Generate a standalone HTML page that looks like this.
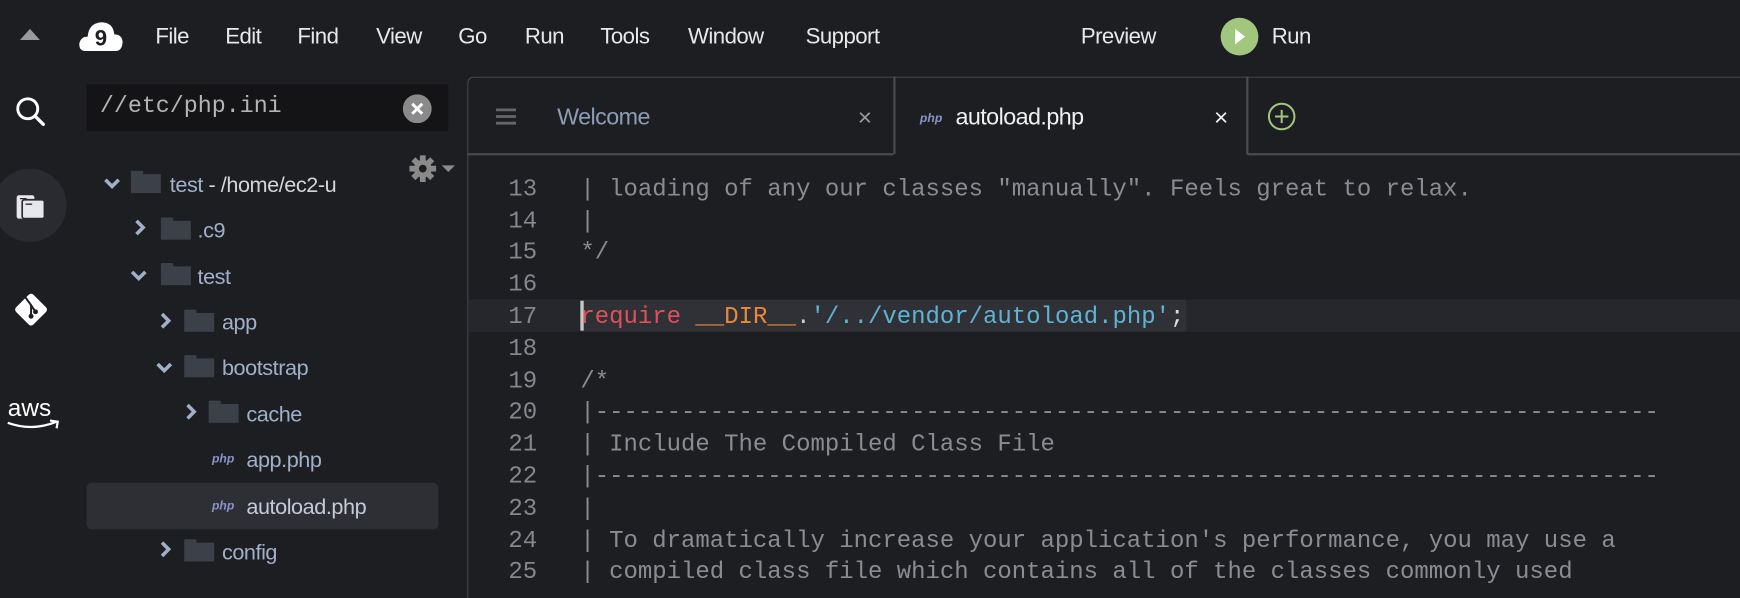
<!DOCTYPE html>
<html><head><meta charset="utf-8"><style>
*{margin:0;padding:0;box-sizing:border-box}
html,body{width:1740px;height:574px;overflow:hidden;background:#1d1e22}
#s{position:absolute;left:0;top:0;width:1568px;height:517px;transform:scale(1.10969);transform-origin:0 0;font-family:"Liberation Sans",sans-serif}
.a{position:absolute;white-space:pre}
.menu{font-size:20px;color:#e8e8e8;top:22px;letter-spacing:-0.5px}
.tr{font-size:19.5px;color:#9fb0c8;letter-spacing:-0.4px;margin-top:2px}
.fold{position:absolute;width:27px;height:20px}
.fold:before{content:"";position:absolute;left:0;top:0;width:11px;height:4px;background:#3b4049;border-radius:1px 1px 0 0}
.fold:after{content:"";position:absolute;left:0;top:3px;width:27px;height:17px;background:#3b4049}
.php{font-size:11px;font-style:italic;font-weight:bold;color:#8a93c8}
.code{font-family:"Liberation Mono",monospace;font-size:21.6px;line-height:28.8px;position:absolute;left:0;top:2px;width:1568px}
.ln{position:absolute;left:430px;width:54px;text-align:right;color:#85878c}
.cl{position:absolute;left:523px;color:#8a8c91}
</style></head><body><div id="s">
<svg class="a" style="left:17px;top:26px" width="20" height="12"><polygon points="10,0 19,10 1,10" fill="#9a9a9a"/></svg>
<svg class="a" style="left:71px;top:16px" width="40" height="32" viewBox="0 0 40 32"><path d="M6 30 Q0 30 0.5 23 Q2 17 8 17 Q9 5 20 4 Q31 4 32 15 Q39 15 39.5 22 Q39 30 33 30 Z" fill="#fff"/><text x="20" y="25" font-family="Liberation Sans" font-weight="bold" font-size="20" text-anchor="middle" fill="#1d1e22">9</text></svg>
<div class="a menu" style="left:140px">File</div>
<div class="a menu" style="left:203px">Edit</div>
<div class="a menu" style="left:268px">Find</div>
<div class="a menu" style="left:339px">View</div>
<div class="a menu" style="left:413px">Go</div>
<div class="a menu" style="left:473px">Run</div>
<div class="a menu" style="left:541px">Tools</div>
<div class="a menu" style="left:620px">Window</div>
<div class="a menu" style="left:726px">Support</div>
<div class="a menu" style="left:974px">Preview</div>
<svg class="a" style="left:1099px;top:15px" width="36" height="36"><circle cx="18" cy="18" r="17" fill="#a1c77f"/><polygon points="14,11 23,18 14,25" fill="#fff"/></svg>
<div class="a menu" style="left:1146px">Run</div>
<svg class="a" style="left:12px;top:85px" width="32" height="32"><circle cx="13" cy="13" r="9" stroke="#fff" stroke-width="2.6" fill="none"/><line x1="20" y1="20" x2="27" y2="27" stroke="#fff" stroke-width="3" stroke-linecap="round"/></svg>
<div class="a" style="left:-6px;top:152px;width:66px;height:66px;border-radius:50%;background:#2a2b30"></div>
<svg class="a" style="left:13px;top:174px" width="30" height="26"><rect x="2" y="2" width="16" height="21" rx="2" fill="#e8e8ec"/><rect x="7" y="6" width="20" height="17" rx="2" fill="#e8e8ec" stroke="#2a2b30" stroke-width="1.5"/><line x1="10" y1="10" x2="16" y2="10" stroke="#2a2b30" stroke-width="1.2"/><line x1="5" y1="5" x2="11" y2="5" stroke="#2a2b30" stroke-width="1.2"/></svg>
<svg class="a" style="left:9px;top:260px" width="38" height="38"><rect x="8" y="8" width="22" height="22" rx="3" fill="#fff" transform="rotate(45 19 19)"/><path d="M14 8 L19 15 L19 25 M19 15 L23 21" stroke="#1d1e22" stroke-width="1.8" fill="none"/><circle cx="19" cy="25" r="2.2" fill="#1d1e22"/><circle cx="23" cy="21" r="2.2" fill="#1d1e22"/></svg>
<div class="a" style="left:7px;top:355px;font-size:22px;color:#fff">aws</div>
<svg class="a" style="left:5px;top:377px" width="50" height="14"><path d="M2 4 Q24 12 46 3" stroke="#fff" stroke-width="2" fill="none"/><path d="M40 2 L47 3 L46 9" stroke="#fff" stroke-width="2" fill="none"/></svg>
<div class="a" style="left:78px;top:76px;width:326px;height:42px;background:#141417"></div>
<div class="a" style="left:90px;top:85px;font-family:'Liberation Mono',monospace;font-size:21px;color:#b4b4b4">//etc/php.ini</div>
<svg class="a" style="left:363px;top:85px" width="26" height="26"><circle cx="13" cy="13" r="13" fill="#8a8a8a"/><path d="M8.5 8.5 L17.5 17.5 M17.5 8.5 L8.5 17.5" stroke="#fff" stroke-width="2.6"/></svg>
<svg class="a" style="left:368px;top:139px" width="46" height="26"><g transform="translate(13 13)" fill="#8a8a8a"><circle r="8"/><rect x="-2.6" y="-12" width="5.2" height="24"/><rect x="-2.6" y="-12" width="5.2" height="24" transform="rotate(45)"/><rect x="-2.6" y="-12" width="5.2" height="24" transform="rotate(90)"/><rect x="-2.6" y="-12" width="5.2" height="24" transform="rotate(135)"/><circle r="3.5" fill="#1d1e22"/></g><polygon points="30,10 42,10 36,16" fill="#8a8a8a"/></svg>
<div class="a" style="left:78px;top:435px;width:317px;height:42px;background:#2e2f34;border-radius:5px"></div>
<svg class="a" width="16" height="16" style="left:93px;top:157px"><path d="M2 5 L8 11 L14 5" stroke="#9fb0c8" stroke-width="3.2" fill="none"/></svg>
<div class="fold" style="left:118px;top:154px"></div><div class="a tr" style="left:153px;top:154px">test<span style="color:#d4d4d4"> - /home/ec2-u</span></div>
<svg class="a" width="16" height="16" style="left:118px;top:197px"><path d="M5 2 L11 8 L5 14" stroke="#9fb0c8" stroke-width="3.2" fill="none"/></svg>
<div class="fold" style="left:145px;top:196px"></div><div class="a tr" style="left:178px;top:195px">.c9</div>
<svg class="a" width="16" height="16" style="left:117px;top:240px"><path d="M2 5 L8 11 L14 5" stroke="#9fb0c8" stroke-width="3.2" fill="none"/></svg>
<div class="fold" style="left:145px;top:237px"></div><div class="a tr" style="left:178px;top:237px">test</div>
<svg class="a" width="16" height="16" style="left:141px;top:281px"><path d="M5 2 L11 8 L5 14" stroke="#9fb0c8" stroke-width="3.2" fill="none"/></svg>
<div class="fold" style="left:166px;top:279px"></div><div class="a tr" style="left:200px;top:278px">app</div>
<svg class="a" width="16" height="16" style="left:140px;top:323px"><path d="M2 5 L8 11 L14 5" stroke="#9fb0c8" stroke-width="3.2" fill="none"/></svg>
<div class="fold" style="left:166px;top:320px"></div><div class="a tr" style="left:200px;top:319px">bootstrap</div>
<svg class="a" width="16" height="16" style="left:164px;top:363px"><path d="M5 2 L11 8 L5 14" stroke="#9fb0c8" stroke-width="3.2" fill="none"/></svg>
<div class="fold" style="left:188px;top:361px"></div><div class="a tr" style="left:222px;top:361px">cache</div>
<div class="a php" style="left:191px;top:408px">php</div><div class="a tr" style="left:222px;top:402px">app.php</div>
<div class="a php" style="left:191px;top:450px">php</div><div class="a tr" style="left:222px;top:444px;color:#c4cbd8">autoload.php</div>
<svg class="a" width="16" height="16" style="left:141px;top:487px"><path d="M5 2 L11 8 L5 14" stroke="#9fb0c8" stroke-width="3.2" fill="none"/></svg>
<div class="fold" style="left:166px;top:486px"></div><div class="a tr" style="left:200px;top:485px">config</div>
<div class="a" style="left:421px;top:69px;width:1160px;height:470px;border:1.5px solid #4a4b50;border-right:none;border-bottom:none;border-radius:6px 0 0 0"></div>
<div class="a" style="left:421px;top:138px;width:384px;height:1.5px;background:#4a4b50"></div>
<div class="a" style="left:1124px;top:138px;width:444px;height:1.5px;background:#4a4b50"></div>
<div class="a" style="left:805px;top:69px;width:1.5px;height:70px;background:#4a4b50"></div>
<div class="a" style="left:1123px;top:69px;width:1.5px;height:70px;background:#4a4b50"></div>
<svg class="a" style="left:446px;top:97px" width="20" height="16"><path d="M1 2H19M1 8H19M1 14H19" stroke="#666" stroke-width="2.5"/></svg>
<div class="a" style="left:502px;top:94px;font-size:21px;color:#8c9db6;letter-spacing:-0.5px">Welcome</div>
<div class="a" style="left:773px;top:93px;font-size:22px;color:#999">×</div>
<div class="a php" style="left:829px;top:101px">php</div>
<div class="a" style="left:861px;top:94px;font-size:21px;color:#f0f0f0;letter-spacing:-0.5px">autoload.php</div>
<div class="a" style="left:1094px;top:93px;font-size:22px;color:#eee">×</div>
<svg class="a" style="left:1142px;top:92px" width="26" height="26"><circle cx="13" cy="13" r="11.5" stroke="#a1c77f" stroke-width="1.8" fill="none"/><path d="M13 7V19M7 13H19" stroke="#a1c77f" stroke-width="1.8"/></svg>
<div class="a" style="left:422px;top:270px;width:1146px;height:29px;background:#26272c"></div>
<div class="a" style="left:523px;top:270px;width:546px;height:29px;background:#303137;border-radius:2px"></div>
<div class="a" style="left:523px;top:271px;width:3px;height:27px;background:#c8c8c8"></div>
<div class="code">
<div class="ln" style="top:155px">13</div><div class="a cl" style="top:155px">| loading of any our classes "manually". Feels great to relax.</div>
<div class="ln" style="top:184px">14</div><div class="a cl" style="top:184px">|</div>
<div class="ln" style="top:212px">15</div><div class="a cl" style="top:212px">*/</div>
<div class="ln" style="top:241px">16</div>
<div class="ln" style="top:270px">17</div><div class="a cl" style="top:270px"><span style="color:#e0505a">require</span> <span style="color:#e8893a">__DIR__</span><span style="color:#ccc">.</span><span style="color:#5fb3d3">'/../vendor/autoload.php'</span><span style="color:#ddd">;</span></div>
<div class="ln" style="top:299px">18</div>
<div class="ln" style="top:328px">19</div><div class="a cl" style="top:328px">/*</div>
<div class="ln" style="top:356px">20</div><div class="a cl" style="top:356px">|--------------------------------------------------------------------------</div>
<div class="ln" style="top:385px">21</div><div class="a cl" style="top:385px">| Include The Compiled Class File</div>
<div class="ln" style="top:414px">22</div><div class="a cl" style="top:414px">|--------------------------------------------------------------------------</div>
<div class="ln" style="top:443px">23</div><div class="a cl" style="top:443px">|</div>
<div class="ln" style="top:472px">24</div><div class="a cl" style="top:472px">| To dramatically increase your application's performance, you may use a</div>
<div class="ln" style="top:500px">25</div><div class="a cl" style="top:500px">| compiled class file which contains all of the classes commonly used</div>
</div>
</div></body></html>
